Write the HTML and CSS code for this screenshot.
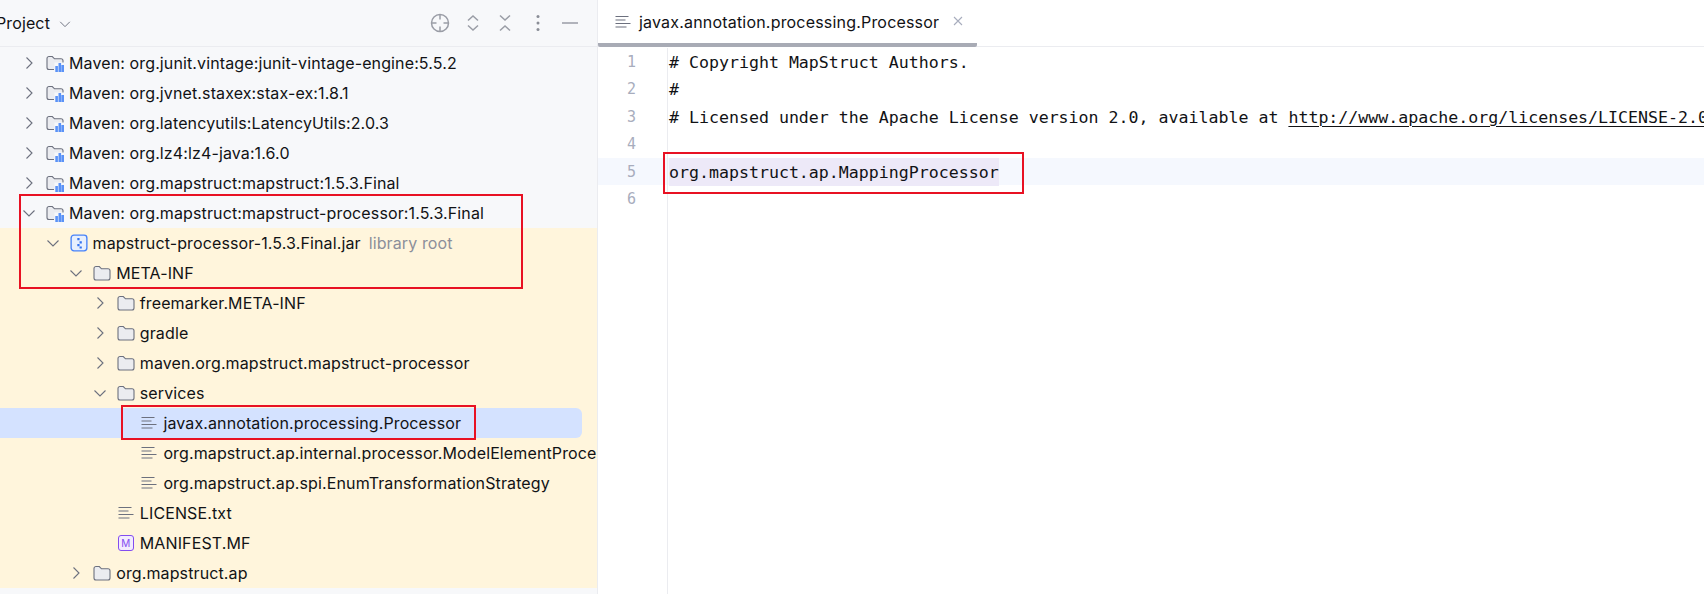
FILE: index.html
```html
<!DOCTYPE html>
<html lang="en">
<head>
<meta charset="utf-8">
<title>Processor</title>
<link rel="stylesheet" href="styles.css">
</head>
<body>
<svg class="defs" width="0" height="0" aria-hidden="true">
  <symbol id="right" viewBox="0 0 16 16"><path d="M5.500 2.500 11 8l-5.500 5.500" fill="none" stroke="#6c707e" stroke-width="1.100"/></symbol>
  <symbol id="down" viewBox="0 0 16 16"><path d="M2.500 5.500 8 11l5.500-5.500" fill="none" stroke="#6c707e" stroke-width="1.100"/></symbol>
  <symbol id="folder" viewBox="0 0 18 18"><path d="M1 4.500A2 2 0 0 1 3 2.500h3.300l2.200 2.300H15a2 2 0 0 1 2 2v7.200a2 2 0 0 1-2 2H3a2 2 0 0 1-2-2z" fill="#ebecf0" stroke="#6c707e" stroke-width="1.100"/></symbol>
  <symbol id="lib" viewBox="0 0 18 18"><path d="M8 15.500H3a2 2 0 0 1-2-2v-9a2 2 0 0 1 2-2h3.300l2.200 2.300H15a2 2 0 0 1 2 2V9" fill="#ebecf0" stroke="#6c707e" stroke-width="1.100"/><path d="M8.500 8.500h9.500V18H8.500z" fill="#f7f8fa"/><path d="M9.300 12h2.600v6H9.300zM12.500 9h2.600v9h-2.600zM15.400 11h2.600v7h-2.600z" fill="#5a92f7"/></symbol>
  <symbol id="jar" viewBox="0 0 16 16"><rect x="1" y="1" width="14" height="14" rx="2.500" fill="#e7effd" stroke="#4682fa" stroke-width="1.200"/><path d="M6.500 3.500h2v2h-2zM8.500 6.500h2v2h-2zM6.500 8.800h2v2h-2zM8.500 11h2v1.800h-2z" fill="#3574f0"/></symbol>
  <symbol id="text" viewBox="0 0 16 14"><path d="M0.500 1.500h13M0.500 5h10M0.500 8.500h15M0.500 12h11" fill="none" stroke="#6c707e" stroke-width="1.200"/></symbol>
</svg>

<div class="app">
  <aside class="sidebar">
    <header class="panel-head">
      <span class="panel-title">Project</span>
      <svg class="title-chevron"><use href="#down"/></svg>
      <div class="tools">
        <svg class="tool" viewBox="0 0 20 20"><circle cx="10" cy="10" r="8.500"/><path d="M10 1.500v5M10 13.500v5M1.500 10h5M13.500 10h5"/></svg>
        <svg class="tool" viewBox="0 0 20 20"><path d="M5 7.500 10 3l5 4.500M5 12.500 10 17l5-4.500"/></svg>
        <svg class="tool" viewBox="0 0 20 20"><path d="M5 2.500 10 7l5-4.500M5 17.500 10 13l5 4.500"/></svg>
        <svg class="tool dots" viewBox="0 0 20 20"><circle cx="10" cy="3.500" r="1.500"/><circle cx="10" cy="10" r="1.500"/><circle cx="10" cy="16.500" r="1.500"/></svg>
        <svg class="tool" viewBox="0 0 20 20"><path d="M2 10h16"/></svg>
      </div>
    </header>
    <div class="tree">
      <div class="row l1"><svg class="chev"><use href="#right"/></svg><svg class="ico"><use href="#lib"/></svg><span>Maven: org.junit.vintage:junit-vintage-engine:5.5.2</span></div>
      <div class="row l1"><svg class="chev"><use href="#right"/></svg><svg class="ico"><use href="#lib"/></svg><span>Maven: org.jvnet.staxex:stax-ex:1.8.1</span></div>
      <div class="row l1"><svg class="chev"><use href="#right"/></svg><svg class="ico"><use href="#lib"/></svg><span>Maven: org.latencyutils:LatencyUtils:2.0.3</span></div>
      <div class="row l1"><svg class="chev"><use href="#right"/></svg><svg class="ico"><use href="#lib"/></svg><span>Maven: org.lz4:lz4-java:1.6.0</span></div>
      <div class="row l1"><svg class="chev"><use href="#right"/></svg><svg class="ico"><use href="#lib"/></svg><span>Maven: org.mapstruct:mapstruct:1.5.3.Final</span></div>
      <div class="row l1"><svg class="chev"><use href="#down"/></svg><svg class="ico"><use href="#lib"/></svg><span>Maven: org.mapstruct:mapstruct-processor:1.5.3.Final</span></div>
      <div class="scope">
        <div class="row l2"><svg class="chev"><use href="#down"/></svg><svg class="ico"><use href="#jar"/></svg><span>mapstruct-processor-1.5.3.Final.jar</span><span class="hint">library root</span></div>
        <div class="row l3"><svg class="chev"><use href="#down"/></svg><svg class="ico"><use href="#folder"/></svg><span>META-INF</span></div>
        <div class="row l4"><svg class="chev"><use href="#right"/></svg><svg class="ico"><use href="#folder"/></svg><span>freemarker.META-INF</span></div>
        <div class="row l4"><svg class="chev"><use href="#right"/></svg><svg class="ico"><use href="#folder"/></svg><span>gradle</span></div>
        <div class="row l4"><svg class="chev"><use href="#right"/></svg><svg class="ico"><use href="#folder"/></svg><span>maven.org.mapstruct.mapstruct-processor</span></div>
        <div class="row l4"><svg class="chev"><use href="#down"/></svg><svg class="ico"><use href="#folder"/></svg><span>services</span></div>
        <div class="row l5 selected"><span class="chev"></span><svg class="ico file"><use href="#text"/></svg><span>javax.annotation.processing.Processor</span></div>
        <div class="row l5"><span class="chev"></span><svg class="ico file"><use href="#text"/></svg><span>org.mapstruct.ap.internal.processor.ModelElementProcessor</span></div>
        <div class="row l5"><span class="chev"></span><svg class="ico file"><use href="#text"/></svg><span>org.mapstruct.ap.spi.EnumTransformationStrategy</span></div>
        <div class="row l4"><span class="chev"></span><svg class="ico file"><use href="#text"/></svg><span>LICENSE.txt</span></div>
        <div class="row l4"><span class="chev"></span><span class="ico manifest">M</span><span>MANIFEST.MF</span></div>
        <div class="row l3"><svg class="chev"><use href="#right"/></svg><svg class="ico"><use href="#folder"/></svg><span>org.mapstruct.ap</span></div>
      </div>
    </div>
  </aside>

  <main class="editor">
    <div class="tabs">
      <div class="tab">
        <svg class="tab-ico"><use href="#text"/></svg>
        <span class="tab-name">javax.annotation.processing.Processor</span>
        <svg class="tab-close" viewBox="0 0 10 10"><path d="M1 1l8 8M9 1l-8 8"/></svg>
      </div>
    </div>
    <div class="code">
      <div class="line"><span class="num">1</span><span class="src"># Copyright MapStruct Authors.</span></div>
      <div class="line"><span class="num">2</span><span class="src">#</span></div>
      <div class="line"><span class="num">3</span><span class="src"># Licensed under the Apache License version 2.0, available at <a class="link">http://www.apache.org/licenses/LICENSE-2.0</a></span></div>
      <div class="line"><span class="num">4</span><span class="src"></span></div>
      <div class="line current"><span class="num">5</span><span class="src"><span class="match">org.mapstruct.ap.MappingProcessor</span></span></div>
      <div class="line"><span class="num">6</span><span class="src"></span></div>
      <div class="line filler"><span class="num"></span><span class="src"></span></div>
    </div>
  </main>

  <div class="mark mark-tree"></div>
  <div class="mark mark-file"></div>
  <div class="mark mark-code"></div>
</div>
</body>
</html>
```
FILE: styles.css
```css
* { box-sizing: border-box; }
html, body { margin: 0; padding: 0; height: 100%; background: #fff; overflow: hidden; }
.defs { position: absolute; }
.app {
  position: relative;
  display: flex;
  width: 1704px;
  height: 594px;
  overflow: hidden;
  font-family: Inter, "Noto Sans", sans-serif;
  font-size: 16px;
  letter-spacing: 0.12px;
  color: #111215;
}

/* Project panel */
.sidebar {
  width: 598px;
  flex: none;
  display: flex;
  flex-direction: column;
  background: #f7f8fa;
  border-right: 1px solid #ebecf0;
  overflow: hidden;
}
.panel-head {
  height: 47px;
  flex: none;
  display: flex;
  align-items: center;
  border-bottom: 1px solid #ebecf0;
  padding-right: 17px;
}
.panel-title { margin-left: -4px; }
.title-chevron { width: 14px; height: 14px; margin-left: 8px; margin-top: 2px; }
.tools { margin-left: auto; display: flex; align-items: center; gap: 12.500px; }
.tool { width: 20px; height: 20px; fill: none; stroke: #9a9da6; stroke-width: 1.500; }
.tool.dots { fill: #8a8d96; stroke: none; }
.tree { padding-top: 1px; }
.scope { background: #fff5dc; }
.row {
  height: 30px;
  display: flex;
  align-items: center;
  white-space: nowrap;
}
.l1 { padding-left: 21px; }
.l2 { padding-left: 44.600px; }
.l3 { padding-left: 68.200px; }
.l4 { padding-left: 91.800px; }
.l5 { padding-left: 115.400px; }
.chev { width: 16px; height: 16px; flex: none; margin-right: 9px; }
.ico { width: 18px; height: 18px; flex: none; margin-right: 5px; }
.ico.file { width: 16px; height: 14px; margin-left: 1px; margin-right: 6px; }
.manifest {
  width: 16px;
  height: 16px;
  margin-left: 1px;
  margin-right: 6px;
  display: flex;
  align-items: center;
  justify-content: center;
  border: 1.200px solid #834df0;
  border-radius: 3px;
  background: #f3ecfe;
  color: #834df0;
  font-size: 10px;
  line-height: 1;
}
.selected { background: #d4e2ff; margin-right: 15px; border-radius: 0 6px 6px 0; }
.hint { color: #8c8f9a; margin-left: 8px; }

/* Editor */
.editor { flex: 1; min-width: 0; display: flex; flex-direction: column; }
.tabs { height: 47px; flex: none; border-bottom: 1px solid #ebecf0; }
.tab {
  width: 379px;
  height: 47px;
  padding-left: 17px;
  display: flex;
  align-items: center;
  border-bottom: 4px solid #a8abb5;
  border-radius: 0 0 2px 2px;
}
.tab-ico { width: 16px; height: 14px; margin-right: 8px; flex: none; }
.tab-name { letter-spacing: 0.19px; }
.tab-close { width: 10px; height: 10px; margin-left: 14px; margin-top: -1px; fill: none; stroke: #a8adbd; stroke-width: 1.100; }
.code {
  flex: 1;
  min-height: 0;
  padding-top: 1px;
  display: flex;
  flex-direction: column;
  font-family: "DejaVu Sans Mono", "Liberation Mono", monospace;
  font-size: 16.600px;
  letter-spacing: 0;
}
.line { height: 27.400px; flex: none; display: flex; white-space: nowrap; }
.line.filler { flex: 1; }
.line.current { background: #f5f8fe; }
.num {
  width: 70px;
  flex: none;
  border-right: 1px solid #ebecf0;
  padding-right: 31px;
  text-align: right;
  color: #a8adbd;
  font-size: 15px;
  line-height: 29.400px;
}
.src { padding-left: 1px; line-height: 29.400px; }
.match { display: inline-block; height: 28px; background: #ede9f8; }
.link { text-decoration: underline; text-underline-offset: 3px; text-decoration-thickness: 1px; }

/* Red annotation boxes drawn over the screenshot */
.mark { position: absolute; border: 2px solid #e81123; pointer-events: none; }
.mark-tree { left: 19px; top: 194px; width: 504px; height: 95px; }
.mark-file { left: 121px; top: 405px; width: 355px; height: 35px; }
.mark-code { left: 663px; top: 152px; width: 361px; height: 42px; }
```
